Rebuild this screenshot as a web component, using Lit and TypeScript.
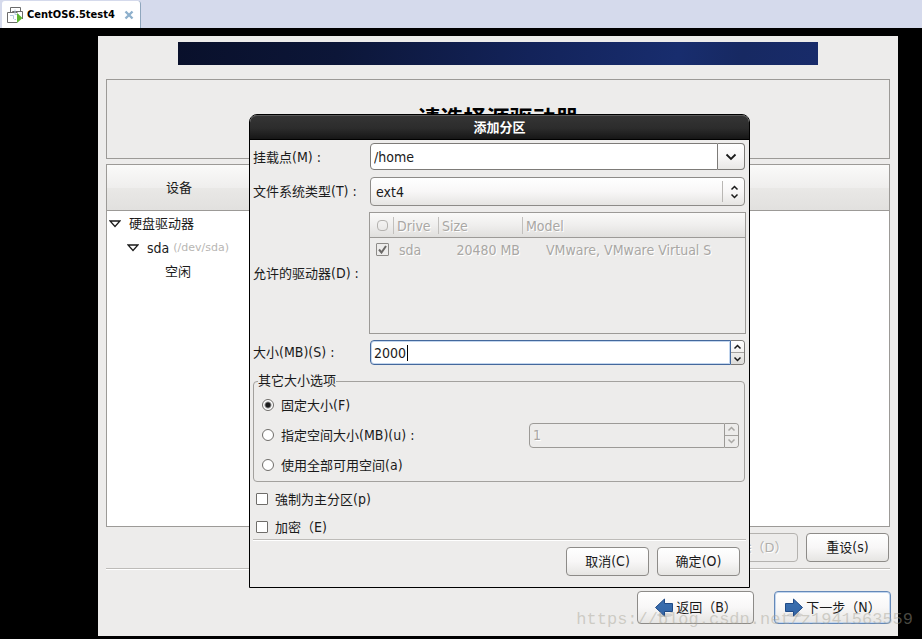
import { LitElement, html, css, svg, nothing } from "lit";
import { customElement, property } from "lit/decorators.js";

const base = css`
  *, *::before, *::after { box-sizing: border-box; }
  button, input, select {
    font: inherit;
    color: inherit;
    margin: 0;
    outline: none;
  }
  svg { display: block; flex: none; }
  .latin { font: 14px/16px "DejaVu Sans Condensed", "DejaVu Sans", sans-serif; }
`;

const chevron = (up: boolean) => svg`<path d=${up ? "M1.5 4.5 L4.5 1.5 L7.5 4.5" : "M1.5 1.5 L4.5 4.5 L7.5 1.5"}
  fill="none" stroke="currentColor" stroke-width="1.5"/>`;

const caption = (text: string, key: string) => html`<span>${text}<span class="latin">${key}</span></span>`;

@customElement("spin-box")
class SpinBox extends LitElement {
  @property() value = "";
  @property() label = "";
  @property({ type: Boolean, reflect: true }) disabled = false;
  @property({ type: Boolean, reflect: true }) active = false;

  static styles = [base, css`
    :host {
      display: flex;
      position: relative;
      height: 25px;
      color: #1a1a1a;
    }
    .entry {
      flex: 1;
      min-width: 0;
      padding: 0 3px;
      border: 1px solid #7d7b78;
      border-radius: 4px 0 0 4px;
      background: #fff;
    }
    :host([active]) .entry {
      border-color: #44689c;
      box-shadow: inset 0 0 0 1px #c3d6ee;
    }
    .steps {
      display: flex;
      flex-direction: column;
      width: 14px;
      border: 1px solid #7d7b78;
      border-left: 0;
      border-radius: 0 4px 4px 0;
      overflow: hidden;
    }
    .step {
      flex: 1;
      display: flex;
      align-items: center;
      justify-content: center;
      padding: 0;
      border: 0;
      background: linear-gradient(#fff, #f3f2f1);
    }
    .step + .step {
      border-top: 1px solid #a3a19e;
      background: linear-gradient(#efeeec, #dddcda);
    }
    :host([disabled]) { color: #a9a7a4; }
    :host([disabled]) .entry,
    :host([disabled]) .steps { border-color: #9c9a97; }
    :host([disabled]) .entry { background: #edeceb; text-shadow: 1px 1px #fff; }
    :host([disabled]) .step { background: #edeceb; }
    .caret {
      position: absolute;
      left: 37px;
      top: 5px;
      width: 1px;
      height: 16px;
      background: #000;
    }
  `];

  render() {
    return html`
      <input class="entry latin" type="text" aria-label=${this.label} .value=${this.value} ?disabled=${this.disabled}>
      ${this.active ? html`<span class="caret"></span>` : nothing}
      <span class="steps">
        <button class="step" aria-label="+" ?disabled=${this.disabled}><svg width="9" height="6">${chevron(true)}</svg></button>
        <button class="step" aria-label="-" ?disabled=${this.disabled}><svg width="9" height="6">${chevron(false)}</svg></button>
      </span>`;
  }
}

@customElement("partition-dialog")
class PartitionDialog extends LitElement {
  static styles = [base, css`
    :host {
      display: block;
      border: 1px solid #000;
      border-radius: 8px 8px 0 0;
      background: #edeceb;
      color: #1a1a1a;
    }
    .title {
      margin: 0;
      height: 25px;
      border-bottom: 1px solid #000;
      border-radius: 7px 7px 0 0;
      box-shadow: inset 0 1px #5a5a5a;
      background: linear-gradient(#353535, #2c2c2c 55%, #161616);
      color: #fff;
      font-size: 13px;
      font-weight: 700;
      line-height: 26px;
      text-align: center;
    }
    .body { padding: 3px 3px 11px; }
    .form {
      display: grid;
      grid-template-columns: 116px minmax(0, 1fr);
      grid-template-rows: 28px 29px 122px 25px;
      row-gap: 6px;
      align-items: center;
    }
    .combo {
      display: flex;
      height: 27px;
      margin: 0 1px;
      align-self: start;
    }
    .entry {
      flex: 1;
      min-width: 0;
      padding: 0 3px;
      border: 1px solid #7d7b78;
      border-radius: 4px 0 0 4px;
      background: #fff;
    }
    .drop {
      display: flex;
      align-items: center;
      justify-content: center;
      width: 27px;
      padding: 0;
      border: 1px solid #7d7b78;
      border-left: 0;
      border-radius: 0 4px 4px 0;
      background: linear-gradient(#fff, #f8f7f7 50%, #e9e8e6);
    }
    .choice { position: relative; margin: 0 1px; }
    .select {
      display: block;
      appearance: none;
      width: 100%;
      height: 29px;
      padding: 0 30px 0 5px;
      border: 1px solid #8d8b88;
      border-radius: 4px;
      background: linear-gradient(#fff, #f8f7f7 50%, #e6e5e3);
    }
    .updown {
      position: absolute;
      right: 0;
      top: 4px;
      display: flex;
      flex-direction: column;
      align-items: center;
      justify-content: center;
      gap: 2px;
      width: 23px;
      height: 21px;
      border-left: 1px solid #b9b7b4;
      pointer-events: none;
    }
    .drives {
      height: 122px;
      border: 1px solid #9c9a97;
      color: #a9a7a4;
      text-shadow: 1px 1px #fff;
    }
    .table { width: 100%; border-collapse: collapse; table-layout: fixed; }
    .table th, .table td { padding: 0 4px; font-weight: 400; text-align: left; white-space: nowrap; }
    .head { background: linear-gradient(#fafaf9, #efeeed 50%, #dfdedc); box-shadow: inset 0 -1px #9c9a97; }
    .head th { height: 25px; }
    .head th + th { background: linear-gradient(#c2c0bd, #c2c0bd) 0 4px / 1px 17px no-repeat; }
    .row td { height: 23px; }
    .table .tick { padding: 0 0 0 6px; }
    .ring {
      display: block;
      width: 11px;
      height: 11px;
      margin-left: 1px;
      border: 1px solid #b4b2af;
      border-radius: 4px;
    }
    .table .name { padding-left: 6px; }
    .table .size { padding: 0 2px 0 0; text-align: right; }
    .table .model { padding-left: 24px; }
    .c0 { width: 23px; }
    .c1 { width: 45px; }
    .c2 { width: 84px; }
    .active { margin: 0 1px; }
    .group {
      margin: 8px 1px 0 0;
      padding: 1px 5px 1px 8px;
      border: 1px solid #a3a19e;
      border-radius: 4px;
      min-width: 0;
    }
    .legend { margin-left: -4px; padding: 0; line-height: 16px; }
    .option { display: flex; align-items: center; justify-content: space-between; height: 30px; }
    .space { width: 210px; }
    .choose { display: flex; align-items: center; gap: 7px; }
    .radio, .check {
      appearance: none;
      flex: none;
      width: 12px;
      height: 12px;
      border: 1px solid #6f6d6a;
      background: #fff;
    }
    .radio { border-radius: 50%; }
    .radio:checked { background: radial-gradient(circle, #1a1a1a 2px, #fff 4px); }
    .check { border-radius: 1px; }
    .check:disabled {
      display: block;
      width: 13px;
      height: 13px;
      border-color: #8d8b88;
      background: #edeceb;
    }
    .ticked { position: relative; }
    .mark { position: absolute; left: 8px; top: 7px; color: #6a6866; pointer-events: none; }
    .checks { display: grid; gap: 4px; padding: 5px 3px 0; }
    .checks .choose { height: 24px; }
    .rule { height: 2px; margin: 0; border: 0; background: linear-gradient(#bdbbb8 50%, #fff 50%); }
    .actions { display: flex; justify-content: flex-end; gap: 8px; padding: 6px 6px 0 0; }
    .action {
      width: 83px;
      height: 29px;
      padding: 0;
      border: 1px solid #8d8b88;
      border-radius: 4px;
      background: linear-gradient(#fff, #f8f7f7 50%, #e6e5e3);
    }
  `];

  render() {
    return html`
      <h2 class="title">添加分区</h2>
      <div class="body">
        <div class="form">
          <label for="mount">${caption("挂载点", "(M) :")}</label>
          <div class="combo">
            <input id="mount" class="entry latin" type="text" value="/home">
            <button class="drop" aria-label="挂载点">
              <svg width="12" height="8"><path d="M1.5 1.5 L6 6 L10.5 1.5" fill="none" stroke="#1a1a1a" stroke-width="1.8"/></svg>
            </button>
          </div>

          <label for="fs">${caption("文件系统类型", "(T) :")}</label>
          <div class="choice">
            <select id="fs" class="select latin"><option>ext4</option></select>
            <span class="updown">
              <svg width="9" height="6">${chevron(true)}</svg>
              <svg width="9" height="6">${chevron(false)}</svg>
            </span>
          </div>

          <span id="allowed">${caption("允许的驱动器", "(D) :")}</span>
          <div class="drives">
            <table class="table latin" aria-labelledby="allowed">
              <colgroup><col class="c0"><col class="c1"><col class="c2"><col></colgroup>
              <thead>
                <tr class="head"><th class="tick"><span class="ring"></span></th><th>Drive</th><th>Size</th><th>Model</th></tr>
              </thead>
              <tbody>
                <tr class="row">
                  <td class="tick ticked">
                    <input class="check" type="checkbox" aria-label="sda" checked disabled>
                    <svg class="mark" width="9" height="9"><path d="M1 4.5 L3.5 7.5 L8 1" fill="none" stroke="currentColor" stroke-width="2"/></svg>
                  </td>
                  <td class="name">sda</td>
                  <td class="size">20480 MB</td>
                  <td class="model">VMware, VMware Virtual S</td>
                </tr>
              </tbody>
            </table>
          </div>

          ${caption("大小", "(MB)(S) :")}
          <spin-box class="active" label="大小(MB)" value="2000" active></spin-box>
        </div>

        <fieldset class="group">
          <legend class="legend">其它大小选项</legend>
          <div class="option">
            <label class="choose"><input class="radio" type="radio" name="size" checked>${caption("固定大小", "(F)")}</label>
          </div>
          <div class="option">
            <label class="choose"><input class="radio" type="radio" name="size">${caption("指定空间大小", "(MB)(u) :")}</label>
            <spin-box class="space" label="指定空间大小(MB)" value="1" disabled></spin-box>
          </div>
          <div class="option">
            <label class="choose"><input class="radio" type="radio" name="size">${caption("使用全部可用空间", "(a)")}</label>
          </div>
        </fieldset>

        <div class="checks">
          <label class="choose"><input class="check" type="checkbox">${caption("強制为主分区", "(p)")}</label>
          <label class="choose"><input class="check" type="checkbox">${caption("加密（", "E)")}</label>
        </div>
        <hr class="rule">
        <div class="actions">
          <button class="action">${caption("取消", "(C)")}</button>
          <button class="action">${caption("确定", "(O)")}</button>
        </div>
      </div>`;
  }
}

const arrow = (left: boolean) => html`
  <svg width="20" height="20" viewBox="0 0 20 20">
    <defs>
      <linearGradient id="blue" x1="0" y1="0" x2="0" y2="1">
        <stop offset="0" stop-color="#3a6fb0"/><stop offset="1" stop-color="#3466a6"/>
      </linearGradient>
    </defs>
    <ellipse cx="11" cy="17" rx="8" ry="2" fill="#000" opacity=".12"/>
    <path d=${left ? "M1.5 9.5 L10.5 1 V5.5 H18.5 V13.5 H10.5 V18 Z" : "M18.5 9.5 L9.5 1 V5.5 H1.5 V13.5 H9.5 V18 Z"}
      fill="url(#blue)" stroke="#1f4a87" stroke-width="1"/>
  </svg>`;

const expander = html`<svg width="12" height="8"><path d="M1 1 H11 L6 6.5 Z" fill="#fff" stroke="#1a1a1a" stroke-width="1.3"/></svg>`;

@customElement("app-root")
class AppRoot extends LitElement {
  static styles = [base, css`
    :host {
      display: flex;
      flex-direction: column;
      min-height: 100vh;
      overflow: hidden;
      position: relative;
      background: #000;
      color: #1a1a1a;
      font: 13px/16px "DejaVu Sans", "Noto Sans CJK SC", sans-serif;
    }
    .tabs { height: 28px; padding: 1px 2px 0; background: #d5daec; }
    .tab {
      display: flex;
      align-items: center;
      width: 139px;
      height: 27px;
      padding: 0 6px 0 5px;
      border-right: 1px solid #8fa6bd;
      border-radius: 3px 3px 0 0;
      background: #fff;
      color: #000;
      font: 700 11px/16px "DejaVu Sans Condensed", "DejaVu Sans", sans-serif;
    }
    .tabname { flex: 1; padding-left: 4px; white-space: nowrap; }
    .close { padding: 0; border: 0; background: none; color: #8eb0cc; }
    .installer {
      position: relative;
      margin: 8px 24px 3px 98px;
      padding: 6px 8px 12px;
      background: #edeceb;
    }
    .banner {
      height: 23px;
      margin: 0 72px;
      background: linear-gradient(100deg, #09102b, #0c1638 25%, #13235a 55%, #182d6e 78%, #172962 88%, #182b6a);
    }
    .heading {
      display: flex;
      align-items: center;
      justify-content: center;
      height: 80px;
      margin: 14px 0 5px;
      border: 1px solid #9c9a97;
      color: #000;
      font-size: 23px;
      font-weight: 700;
    }
    .heading h1 { margin: 0; font: inherit; }
    .devices { height: 363px; border: 1px solid #9c9a97; background: #fff; }
    .tree { width: 100%; border-collapse: collapse; table-layout: fixed; }
    .first { width: 144px; }
    .tree th { padding: 0; font-weight: 400; }
    .tree td { height: 24px; padding: 2px 0 0; }
    .columns { background: linear-gradient(#fafaf9, #efeeed 50%, #e9e8e6 51%, #e1e0de); box-shadow: inset 0 -1px #9c9a97; }
    .columns th { height: 46px; }
    .node { display: flex; align-items: center; gap: 8px; padding-left: 2px; white-space: nowrap; }
    .child { padding-left: 20px; }
    .leaf { padding-left: 58px; }
    .path { margin-left: -4px; color: #b8b6b3; font-size: 11px; }
    .tools { display: flex; justify-content: flex-end; gap: 8px; padding: 6px 1px 6px 0; }
    .button {
      width: 83px;
      height: 29px;
      padding: 0;
      border: 1px solid #8d8b88;
      border-radius: 4px;
      background: linear-gradient(#fff, #f8f7f7 50%, #e6e5e3);
    }
    .button:disabled { border-color: #b4b2af; background: #edeceb; color: #b1afac; text-shadow: 1px 1px #fff; }
    .rule { height: 2px; margin: 0; border: 0; background: linear-gradient(#bdbbb8 50%, #fff 50%); }
    .nav { display: flex; justify-content: flex-end; gap: 20px; margin: 21px -1px 0 0; }
    .nav .button {
      display: flex;
      align-items: center;
      justify-content: center;
      gap: 2px;
      width: 117px;
      height: 33px;
    }
    .nav .next { border-color: #6488b8; box-shadow: inset 0 0 0 1px #c3d6ee; }
    .dialog { position: absolute; top: 78px; left: 151px; right: 148px; }
    .watermark {
      position: absolute;
      right: 9px;
      bottom: 7px;
      color: rgba(165, 162, 148, 0.45);
      font: 17px/24px "Liberation Mono", monospace;
      pointer-events: none;
    }
  `];

  render() {
    return html`
      <nav class="tabs">
        <div class="tab">
          <svg width="16" height="16" viewBox="0 0 16 16">
            <path d="M3.5 5 V0.5 H13.5 V4" fill="none" stroke="#6b6b6b"/>
            <path d="M5.5 5 V4.5 H15.5 V12" fill="none" stroke="#6b6b6b"/>
            <path d="M10.5 5.5 H0.5 V15.5 H10" fill="none" stroke="#6b6b6b"/>
            <path d="M3 8.5 H6.5 V12 M8 2.5 V7.5 H12 M7.5 12.5 H9" fill="none" stroke="#b5cbe0"/>
            <path d="M10 6 L15.5 11 L10 16 Z" fill="#5cb531"/>
          </svg>
          <span class="tabname">CentOS6.5test4</span>
          <button class="close" aria-label="关闭">
            <svg width="10" height="10"><path d="M1.5 1.5 L8.5 8.5 M8.5 1.5 L1.5 8.5" stroke="currentColor" stroke-width="2.4"/></svg>
          </button>
        </div>
      </nav>
      <main class="installer">
        <div class="banner"></div>
        <header class="heading"><h1>请选择源驱动器</h1></header>
        <div class="devices">
          <table class="tree">
            <colgroup><col class="first"><col></colgroup>
            <thead><tr class="columns"><th>设备</th><th></th></tr></thead>
            <tbody>
              <tr><td><div class="node">${expander}硬盘驱动器</div></td><td></td></tr>
              <tr><td><div class="node child">${expander}<span class="latin">sda</span> <span class="path">(/dev/sda)</span></div></td><td></td></tr>
              <tr><td><div class="node leaf">空闲</div></td><td></td></tr>
            </tbody>
          </table>
        </div>
        <div class="tools">
          <button class="button" disabled>删除（D）</button>
          <button class="button">${caption("重设", "(s)")}</button>
        </div>
        <hr class="rule">
        <div class="nav">
          <button class="button">${arrow(true)}<span>返回（<span class="latin">B</span>）</span></button>
          <button class="button next">${arrow(false)}<span>下一步（<span class="latin">N</span>）</span></button>
        </div>
        <partition-dialog class="dialog" role="dialog" aria-label="添加分区"></partition-dialog>
      </main>
      <div class="watermark">https://blog.csdn.net/z1941563559</div>`;
  }
}
